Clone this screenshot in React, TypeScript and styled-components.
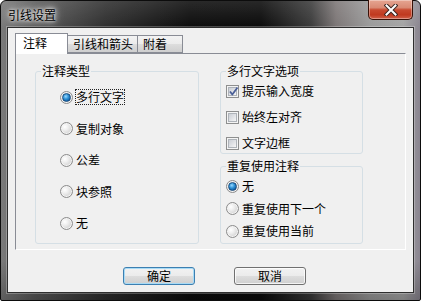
import React from 'react';
import styled, { createGlobalStyle } from 'styled-components';

const Global = createGlobalStyle`
  html, body { margin: 0; padding: 0; background: #ffffff; }
  body { font-family: "Noto Sans CJK SC", "Liberation Sans", sans-serif; font-size: 12px; color: #000; }
  * { box-sizing: border-box; }
`;

const Window = styled.div`
  width: 421px;
  height: 301px;
  display: flex;
  flex-direction: column;
  border: 1px solid #0c0c0c;
  border-radius: 6px 6px 2px 2px;
  padding: 0 7px 8px 7px;
  background:
    linear-gradient(to bottom, rgba(255,255,255,0.12) 0px, rgba(255,255,255,0) 28px, rgba(0,0,0,0) 260px, rgba(0,0,0,0.25) 301px),
    linear-gradient(to right, #7a7a7a 0%, #5a5a5a 8%, #2e2e2e 25%, #0c0c0c 45%, #0a0a0a 62%, #3a3a3a 74%, #7c7676 80%, #9a9a9a 88%, #a4a4a4 96%, #8a8590 100%);
`;

const TitleBar = styled.div`
  height: 27px;
  display: flex;
  justify-content: space-between;
  align-items: flex-start;
`;

const Title = styled.div`
  padding-top: 6px;
  font-size: 12px;
  line-height: 15px;
  color: #000;
  text-shadow: 0 0 6px rgba(255,255,255,0.95), 0 0 3px rgba(255,255,255,0.9), 0 0 10px rgba(255,255,255,0.7);
`;

const CloseButton = styled.div`
  width: 45px;
  height: 20px;
  margin-top: -1px;
  display: flex;
  align-items: center;
  justify-content: center;
  border: 1px solid #3a1208;
  border-top: none;
  border-radius: 0 0 5px 5px;
  background: linear-gradient(to bottom, #e6a592 0%, #d98a74 40%, #c84a30 52%, #c0391f 78%, #d0614a 100%);
  box-shadow: inset 0 0 0 1px rgba(255,255,255,0.35);
`;

const Client = styled.div`
  flex: 1;
  display: flex;
  flex-direction: column;
  background: #f0f0f0;
  padding: 4px 7px 0 7px;
  box-shadow: 0 0 0 1px #2e2e2e, 0 0 0 2px rgba(255,255,255,0.25);
`;

const TabStrip = styled.div`
  height: 21px;
  display: flex;
  align-items: flex-end;
`;

const Tab = styled.div<{ $active?: boolean; $first?: boolean; $w: number }>`
  width: ${p => p.$w}px;
  height: ${p => (p.$active ? 21 : 18)}px;
  position: ${p => (p.$active ? 'relative' : 'static')};
  z-index: ${p => (p.$active ? 1 : 0)};
  margin-bottom: ${p => (p.$active ? -1 : 0)}px;
  border: 1px solid #898c95;
  border-bottom: ${p => (p.$active ? 'none' : '1px solid #898c95')};
  border-left: ${p => (p.$first ? '1px solid #898c95' : 'none')};
  background: ${p => (p.$active ? '#ffffff' : 'linear-gradient(to bottom, #f3f3f3 0%, #ebebeb 50%, #dddddd 51%, #cfcfcf 100%)')};
  padding-left: ${p => (p.$active ? 7 : 5)}px;
  padding-top: ${p => (p.$active ? 2 : 1)}px;
  line-height: 14px;
  font-size: 12px;
`;

const Panel = styled.div`
  height: 197px;
  border-top: 1px solid #898c95;
  border-left: 1px solid #898c95;
  border-right: 1px solid #ffffff;
  border-bottom: 1px solid #ffffff;
  padding: 9px 0 0 19px;
  display: flex;
  gap: 21px;
`;

const Column = styled.div`
  display: flex;
  flex-direction: column;
  gap: 4px;
`;

const Group = styled.fieldset<{ $w: number; $h: number }>`
  width: ${p => p.$w}px;
  height: ${p => p.$h}px;
  margin: 0;
  padding: 0;
  border: 1px solid #d5dfe5;
  border-radius: 3px;
  min-inline-size: 0;
`;

const Legend = styled.legend`
  margin-left: 5px;
  padding: 0 1px;
  font-size: 12px;
  line-height: 16px;
  color: #000;
`;

const GroupBody = styled.div<{ $pt: number; $pl: number; $gap: number }>`
  display: flex;
  flex-direction: column;
  padding-top: ${p => p.$pt}px;
  padding-left: ${p => p.$pl}px;
  gap: ${p => p.$gap}px;
`;

const Row = styled.div`
  height: 16px;
  display: flex;
  align-items: center;
  gap: 3px;
`;

const Label = styled.span<{ $focused?: boolean }>`
  font-size: 12px;
  line-height: 14px;
  height: 14px;
  white-space: nowrap;
  outline: ${p => (p.$focused ? '1px dotted #222' : 'none')};
`;

const RadioCircle = styled.span<{ $checked?: boolean }>`
  width: 13px;
  height: 13px;
  flex: none;
  border-radius: 50%;
  border: 1px solid #8c8c8c;
  background: radial-gradient(circle at 35% 35%, #ffffff 0%, #f0f0f0 30%, #cfcfcf 80%, #c4c4c4 100%);
  box-shadow: inset 0 0 0 1px #f4f4f4;
  display: flex;
  align-items: center;
  justify-content: center;
  &::after {
    content: '';
    display: ${p => (p.$checked ? 'block' : 'none')};
    width: 7px;
    height: 7px;
    border-radius: 50%;
    background: radial-gradient(circle at 40% 35%, #9ad9ff 0%, #3496d8 40%, #0b5aa2 80%, #063f7a 100%);
    border: 1px solid #1b4d7e;
  }
`;

const CheckBox = styled.span`
  width: 13px;
  height: 13px;
  flex: none;
  border: 1px solid #8e8f8f;
  padding: 1px;
  background: #f4f4f4;
  display: flex;
  align-items: center;
  justify-content: center;
`;

const CheckInner = styled.span`
  width: 9px;
  height: 9px;
  background: linear-gradient(135deg, #cbcfd5 0%, #dfe1e5 50%, #f6f6f6 100%);
  border: 1px solid #aeb3b9;
  position: relative;
`;

const CheckMark = styled.svg`
  position: absolute;
  left: -1px;
  top: -2px;
`;

const ButtonRow = styled.div`
  display: flex;
  gap: 39px;
  padding-left: 108px;
  margin-top: 17px;
`;

const Button = styled.button<{ $default?: boolean }>`
  width: 72px;
  height: 18px;
  padding: 0;
  margin: 0;
  border: 1px solid ${p => (p.$default ? '#3c7fb1' : '#707070')};
  border-radius: 3px;
  background: linear-gradient(to bottom, #f2f2f2 0%, #ebebeb 50%, #dddddd 51%, #cfcfcf 100%);
  box-shadow: inset 0 0 0 1px ${p => (p.$default ? '#a8dbf6' : 'rgba(255,255,255,0.75)')};
  font-family: "Noto Sans CJK SC", "Liberation Sans", sans-serif;
  font-size: 12px;
  line-height: 14px;
  color: #000;
`;

function Radio({ checked, label, focused }: { checked?: boolean; label: string; focused?: boolean }) {
  return (
    <Row>
      <RadioCircle $checked={checked} />
      <Label $focused={focused}>{label}</Label>
    </Row>
  );
}

function Check({ checked, label }: { checked?: boolean; label: string }) {
  return (
    <Row>
      <CheckBox>
        <CheckInner>
          {checked && (
            <CheckMark width="11" height="11" viewBox="0 0 11 11">
              <path d="M2 5.5 L4.3 8.5 L9.5 1.5" fill="none" stroke="#4a5f97" strokeWidth="1.8" strokeLinejoin="round" />
            </CheckMark>
          )}
        </CheckInner>
      </CheckBox>
      <Label>{label}</Label>
    </Row>
  );
}

export default function App() {
  return (
    <>
      <Global />
      <Window>
        <TitleBar>
          <Title>引线设置</Title>
          <CloseButton>
            <svg width="14" height="12" viewBox="0 0 14 12">
              <path d="M2.5 1.5 L11.5 10.5 M11.5 1.5 L2.5 10.5" stroke="#3b2520" strokeWidth="4" strokeLinecap="square" />
              <path d="M2.5 1.5 L11.5 10.5 M11.5 1.5 L2.5 10.5" stroke="#ffffff" strokeWidth="2" strokeLinecap="square" />
            </svg>
          </CloseButton>
        </TitleBar>
        <Client>
          <TabStrip>
            <Tab $active $first $w={53}>注释</Tab>
            <Tab $w={70}>引线和箭头</Tab>
            <Tab $w={45}>附着</Tab>
          </TabStrip>
          <Panel>
            <Group $w={164} $h={181}>
              <Legend>注释类型</Legend>
              <GroupBody $pt={10} $pl={24} $gap={15.5}>
                <Radio checked focused label="多行文字" />
                <Radio label="复制对象" />
                <Radio label="公差" />
                <Radio label="块参照" />
                <Radio label="无" />
              </GroupBody>
            </Group>
            <Column>
              <Group $w={143} $h={91}>
                <Legend>多行文字选项</Legend>
                <GroupBody $pt={4} $pl={5} $gap={10}>
                  <Check checked label="提示输入宽度" />
                  <Check label="始终左对齐" />
                  <Check label="文字边框" />
                </GroupBody>
              </Group>
              <Group $w={143} $h={86}>
                <Legend>重复使用注释</Legend>
                <GroupBody $pt={4} $pl={5} $gap={6.5}>
                  <Radio checked label="无" />
                  <Radio label="重复使用下一个" />
                  <Radio label="重复使用当前" />
                </GroupBody>
              </Group>
            </Column>
          </Panel>
          <ButtonRow>
            <Button $default>确定</Button>
            <Button>取消</Button>
          </ButtonRow>
        </Client>
      </Window>
    </>
  );
}
